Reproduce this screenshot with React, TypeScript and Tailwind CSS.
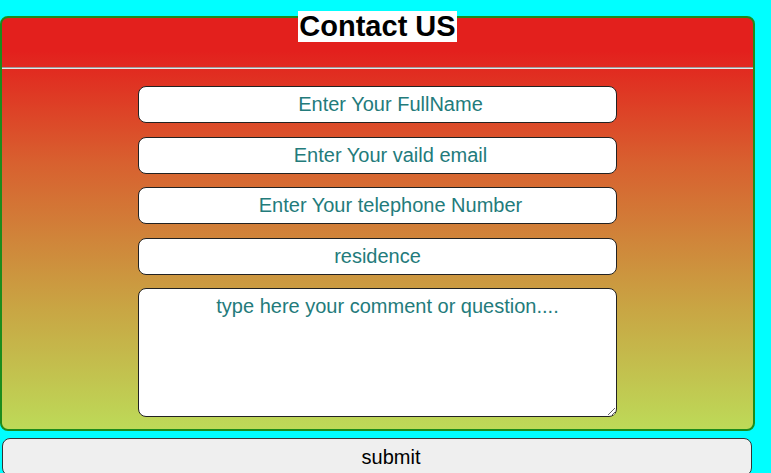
import React from "react";

const inputCls =
  "block ml-[136px] w-[479px] h-[37px] rounded-[8px] border border-[#222] bg-white text-center text-[20px] text-[#237b7b] placeholder:text-[#237b7b] outline-none";

export default function App() {
  return (
    <div className="min-h-screen w-full bg-[#00ffff] pt-[16px] font-['Liberation_Sans',Arial,sans-serif]">
      <form className="w-[755px]">
        <div className="rounded-[8px] border-2 border-[#1c8c1c] bg-[linear-gradient(#e3201d_8%,#d8602f_35%,#c9a443_70%,#bdda58)] pb-[12px]">
          <div className="flex justify-center -mt-[7px]">
            <h1 className="bg-white px-[1px] text-[29px] leading-[31px] font-bold text-black">
              Contact US
            </h1>
          </div>
          <div className="mt-[25px] mb-[17px] border-t border-b border-t-[#9c9c9c] border-b-[#e6e6e6]" />
          <input className={inputCls + " mb-[14px] pl-[26px]"} placeholder="Enter Your FullName" />
          <input className={inputCls + " mb-[13px] pl-[26px]"} placeholder="Enter Your vaild email" />
          <input className={inputCls + " mb-[14px] pl-[26px]"} placeholder="Enter Your telephone Number" />
          <input className={inputCls + " mb-[13px]"} placeholder="residence" />
          <textarea
            className="block ml-[136px] w-[479px] h-[129px] rounded-[8px] border border-[#222] bg-white pt-[6px] pl-[20px] text-center text-[20px] leading-[23px] text-[#237b7b] placeholder:text-[#237b7b] outline-none"
            placeholder="type here your comment or question...."
          />
        </div>
        <button
          type="button"
          className="mt-[7px] ml-[2px] block w-[750px] h-[38px] rounded-[8px] border border-[#333] bg-[#efefef] pl-[28px] text-center text-[20px] text-black"
        >
          submit
        </button>
      </form>
    </div>
  );
}
